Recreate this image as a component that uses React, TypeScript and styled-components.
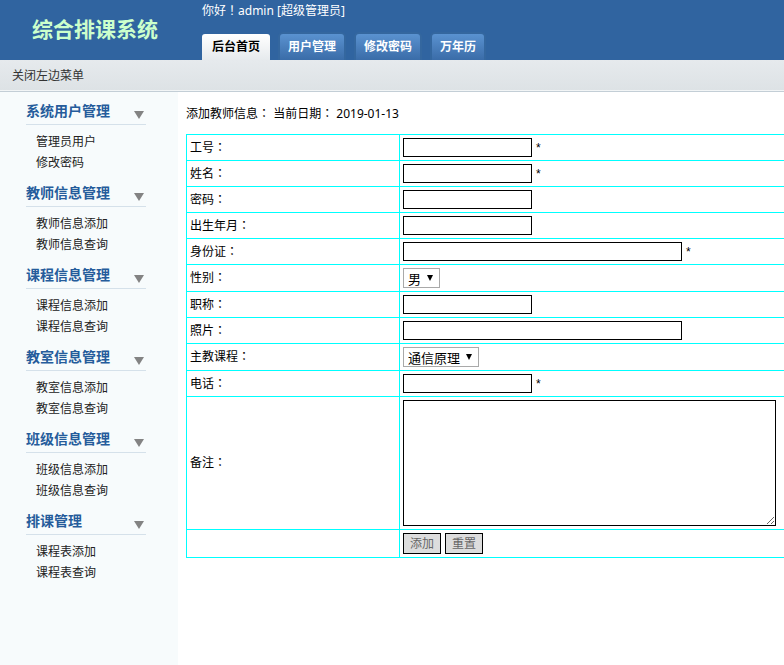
import React, { ReactNode } from 'react';
import styled, { createGlobalStyle } from 'styled-components';

const GlobalStyle = createGlobalStyle`
  * { box-sizing: border-box; }
  body {
    margin: 0;
    background: #fff;
    color: #000;
    font: 12px/18px "Noto Sans", "Noto Sans CJK SC", sans-serif;
  }
  input, select, textarea, button { font-family: inherit; margin: 0; }
  a { color: inherit; text-decoration: none; }
`;

const Page = styled.div`
  display: flex;
  flex-direction: column;
  min-height: 100vh;
  overflow-x: hidden;
`;

const Header = styled.header`
  display: flex;
  height: 60px;
  background: #3064a0;
  color: #fff;
`;

const Brand = styled.h1`
  flex: none;
  width: 202px;
  margin: 0;
  padding: 14px 0 0 32px;
  font-size: 21px;
  line-height: 30px;
  font-weight: 700;
  color: #ccffcc;
`;

const HeaderMain = styled.div`
  display: flex;
  flex-direction: column;
  justify-content: space-between;
  padding-top: 2px;
`;

const Tabs = styled.nav`
  display: flex;
  gap: 12px;
`;

const Tab = styled.a<{ $active?: boolean }>`
  height: 26px;
  padding: 0 ${p => (p.$active ? 10 : 8)}px;
  margin-right: ${p => (p.$active ? -2 : 0)}px;
  border-radius: 3px 3px 0 0;
  line-height: 26px;
  font-weight: 700;
  && { color: ${p => (p.$active ? '#000' : '#fff')}; }
  background: ${p => (p.$active
    ? 'linear-gradient(#fff, #e6eaed)'
    : 'linear-gradient(#5a92d0, #3a6ca8)')};
  box-shadow: ${p => (p.$active ? 'none' : '0 0 0 2px #34679f')};
`;

const Toolbar = styled.div`
  height: 32px;
  padding: 0 12px;
  background: linear-gradient(#e6eaed, #dde2e5);
  border-bottom: 1px solid #c3ced6;
  box-shadow: inset 0 -1px #f2f5f6;
  color: #333;
  line-height: 32px;
`;

const Body = styled.div`
  display: flex;
  flex: 1;
`;

const Sidebar = styled.aside`
  flex: none;
  width: 178px;
  padding: 8px 32px 0 26px;
  background: #f7fbfc;
`;

const Group = styled.section`
  margin-bottom: 9px;
`;

const GroupTitle = styled.h2`
  display: flex;
  align-items: center;
  justify-content: space-between;
  height: 25px;
  margin: 0 0 6px;
  padding: 0 2px 2px 0;
  border-bottom: 1px solid #d5e1ea;
  font-size: 14px;
  line-height: 22px;
  font-weight: 700;
  color: #255c9b;
`;

const Arrow = styled.svg`
  width: 10px;
  height: 8px;
  margin-top: 8px;
  fill: #838383;
`;

const Links = styled.ul`
  margin: 0;
  padding: 0 0 0 10px;
  list-style: none;
  line-height: 21px;
  color: #222;
`;

const Main = styled.main`
  flex: 1;
  min-width: 0;
  padding: 13px 0 0 8px;
`;

const Caption = styled.p`
  margin: 0 0 11px;
`;

/* Full-width punctuation centred in its character cell. */
const Mark = styled.span`
  font-family: "Noto Sans CJK TC", sans-serif;
  line-height: 1;
`;

const FormTable = styled.table`
  width: 100%;
  table-layout: fixed;
  border-collapse: separate;
  border-spacing: 0;
  border-top: 1px solid #0ff;
  th, td {
    padding: 3px;
    border-left: 1px solid #0ff;
    border-bottom: 1px solid #0ff;
    text-align: left;
    font-weight: 400;
    vertical-align: middle;
  }
  th { width: 213px; }
`;

const Cell = styled.div`
  display: flex;
  align-items: center;
  gap: 4px;
`;

const Required = styled.span`
  font-family: "Liberation Sans", sans-serif;
`;

const TextInput = styled.input<{ $wide?: boolean }>`
  width: ${p => (p.$wide ? 279 : 129)}px;
  height: 19px;
  padding: 1px;
  border: 1px solid #000;
  border-radius: 0;
  background: #fff;
  font-size: 12px;
`;

const SelectBox = styled.span`
  display: inline-grid;
  align-items: center;
  > * { grid-area: 1 / 1; }
`;

const Select = styled.select`
  appearance: none;
  height: 20px;
  padding: 1px 17px 0 4px;
  border: 1px solid #a9a9a9;
  border-radius: 0;
  background: #fff;
  color: #000;
  font-size: 13px;
  line-height: 18px;
`;

const SelectArrow = styled.svg`
  justify-self: end;
  width: 6px;
  height: 6px;
  margin-right: 7px;
  pointer-events: none;
`;

const Notes = styled.textarea`
  display: block;
  width: 373px;
  height: 126px;
  padding: 2px;
  border: 1px solid #000;
  border-radius: 0;
  background: #fff;
  font-size: 12px;
`;

const Button = styled.button`
  height: 21px;
  padding: 0 6px;
  border: 1px solid #000;
  border-radius: 0;
  background: #ddd;
  color: #666;
  font-size: 12px;
  line-height: 19px;
`;

const menu = [
  { title: '系统用户管理', items: ['管理员用户', '修改密码'] },
  { title: '教师信息管理', items: ['教师信息添加', '教师信息查询'] },
  { title: '课程信息管理', items: ['课程信息添加', '课程信息查询'] },
  { title: '教室信息管理', items: ['教室信息添加', '教室信息查询'] },
  { title: '班级信息管理', items: ['班级信息添加', '班级信息查询'] },
  { title: '排课管理', items: ['课程表添加', '课程表查询'] },
];

const tabs = ['后台首页', '用户管理', '修改密码', '万年历'];

function Row({ id, label, children }: { id: string; label: string; children: ReactNode }) {
  return (
    <tr>
      <th scope="row"><label htmlFor={id}>{label}<Mark lang="zh-TW">：</Mark></label></th>
      <td><Cell>{children}</Cell></td>
    </tr>
  );
}

function TextRow({ id, label, wide, required, type = 'text' }: {
  id: string; label: string; wide?: boolean; required?: boolean; type?: string;
}) {
  return (
    <Row id={id} label={label}>
      <TextInput id={id} type={type} $wide={wide} />
      {required && <Required>*</Required>}
    </Row>
  );
}

function SelectRow({ id, label, option }: { id: string; label: string; option: string }) {
  return (
    <Row id={id} label={label}>
      <SelectBox>
        <Select id={id}><option>{option}</option></Select>
        <SelectArrow viewBox="0 0 6 6" aria-hidden="true"><path d="M0 0h6L3 6z" /></SelectArrow>
      </SelectBox>
    </Row>
  );
}

export default function App() {
  return (
    <Page>
      <GlobalStyle />
      <Header>
        <Brand>综合排课系统</Brand>
        <HeaderMain>
          <span>你好<Mark lang="zh-TW">！</Mark>admin [超级管理员]</span>
          <Tabs>
            {tabs.map((t, i) => <Tab key={t} href="#" $active={i === 0}>{t}</Tab>)}
          </Tabs>
        </HeaderMain>
      </Header>
      <Toolbar><a href="#">关闭左边菜单</a></Toolbar>
      <Body>
        <Sidebar>
          {menu.map(g => (
            <Group key={g.title}>
              <GroupTitle>
                {g.title}
                <Arrow viewBox="0 0 10 8" aria-hidden="true"><path d="M0 0h10L5 8z" /></Arrow>
              </GroupTitle>
              <Links>
                {g.items.map(item => <li key={item}><a href="#">{item}</a></li>)}
              </Links>
            </Group>
          ))}
        </Sidebar>
        <Main>
          <Caption>
            添加教师信息<Mark lang="zh-TW">：</Mark> 当前日期<Mark lang="zh-TW">：</Mark> 2019-01-13
          </Caption>
          <form onSubmit={e => e.preventDefault()}>
            <FormTable>
              <tbody>
                <TextRow id="number" label="工号" required />
                <TextRow id="name" label="姓名" required />
                <TextRow id="password" label="密码" type="password" />
                <TextRow id="birth" label="出生年月" />
                <TextRow id="idcard" label="身份证" wide required />
                <SelectRow id="gender" label="性别" option="男" />
                <TextRow id="rank" label="职称" />
                <TextRow id="photo" label="照片" wide />
                <SelectRow id="course" label="主教课程" option="通信原理" />
                <TextRow id="phone" label="电话" required />
                <Row id="notes" label="备注"><Notes id="notes" /></Row>
                <tr>
                  <td />
                  <td>
                    <Cell>
                      <Button type="submit">添加</Button>
                      <Button type="reset">重置</Button>
                    </Cell>
                  </td>
                </tr>
              </tbody>
            </FormTable>
          </form>
        </Main>
      </Body>
    </Page>
  );
}
